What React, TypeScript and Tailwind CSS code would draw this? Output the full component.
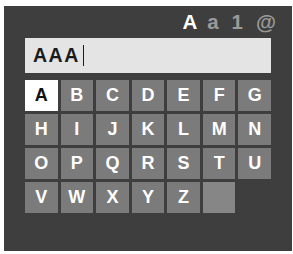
import React from "react";

const rows = [
  ["A", "B", "C", "D", "E", "F", "G"],
  ["H", "I", "J", "K", "L", "M", "N"],
  ["O", "P", "Q", "R", "S", "T", "U"],
  ["V", "W", "X", "Y", "Z", ""],
];

const App = () => {
  return (
    <div className="bg-white w-[293px] h-[254px] pt-[6px] pl-[4px] font-['Liberation_Sans',Arial,sans-serif]">
      <div className="w-[288px] h-[245px] bg-[#3e3e3e] pt-[6px] px-[21px]">
        {/* mode switches */}
        <div className="flex justify-end items-center h-[20px] text-[20.5px] leading-[20px] font-bold mr-[-5px]">
          <span className="text-white">A</span>
          <span className="text-[#9a9a9a] ml-[10px]">a</span>
          <span className="text-[#9a9a9a] ml-[13px]">1</span>
          <span className="text-[#9a9a9a] ml-[13px]">@</span>
        </div>

        {/* input */}
        <div className="mt-[6px] h-[35px] bg-[#e4e4e4] flex items-center pl-[8px]">
          <span className="text-[19.5px] leading-[35px] font-bold text-[#1a1a1a] tracking-[1.5px]">AAA</span>
          <span className="inline-block w-[1.5px] h-[21px] bg-[#1a1a1a] ml-[3px]" />
        </div>

        {/* keys */}
        <div className="mt-[7px] grid grid-cols-7 gap-[3px]">
          {rows.flat().map((k, i) => (
            <div
              key={i}
              className={
                "h-[31px] flex items-center justify-center text-[18px] font-bold " +
                (i === 0
                  ? "bg-white text-[#111111]"
                  : k === ""
                  ? "bg-[#868686]"
                  : "bg-[#7b7b7b] text-white")
              }
            >
              {k}
            </div>
          ))}
        </div>
      </div>
    </div>
  );
};

export default App;
